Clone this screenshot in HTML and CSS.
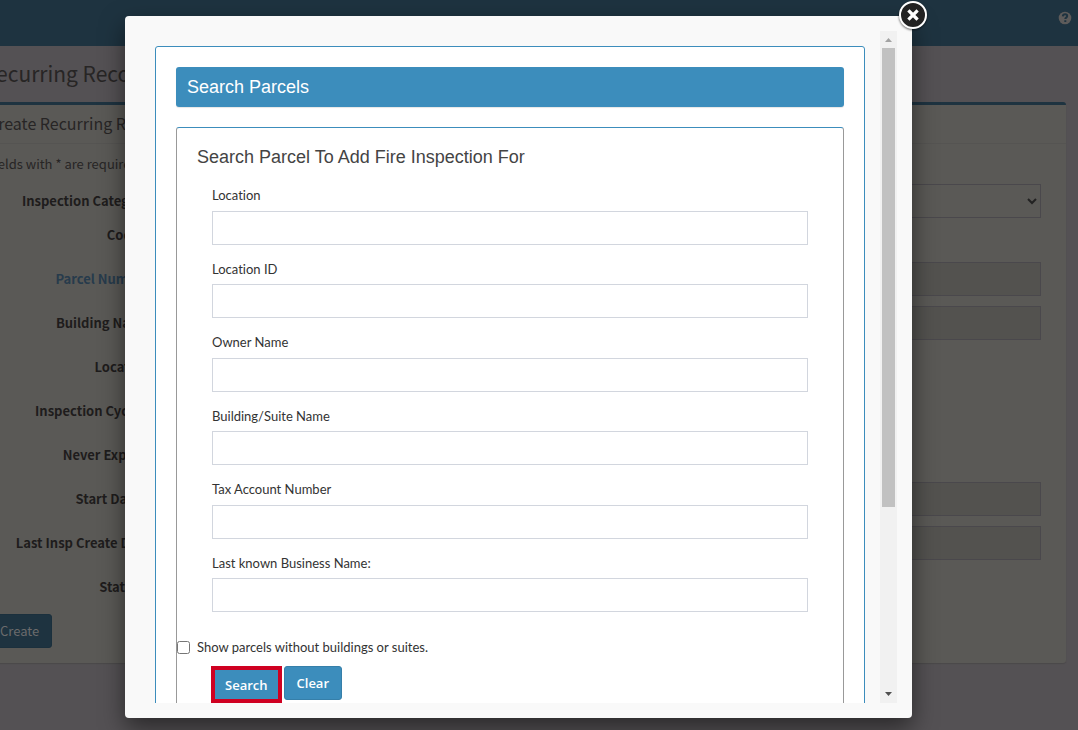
FILE: index.html
```
<!DOCTYPE html>
<html lang="en">
<head>
    <meta charset="UTF-8">
    <meta name="viewport" content="width=device-width, initial-scale=1.0">
    <title>Search Parcels</title>
    <link rel="stylesheet" href="styles.css">
</head>
<body>

<header class="navbar">
    <a href="#" class="help" aria-label="Help">
        <svg width="14" height="14" viewBox="0 0 14 14"><circle cx="7" cy="7" r="6.3" fill="#5d5b5a"/><path d="M4.800 5.300C5 3.900 5.900 3.300 7.100 3.300c1.200 0 2.100.7 2.100 1.800 0 1.500-1.900 1.500-1.900 2.900M7.300 9.200v1.800" fill="none" stroke="#1e3340" stroke-width="2"/></svg>
    </a>
</header>

<main class="page">
    <h1 class="page-title">Recurring Records</h1>
    <section class="box">
        <h2 class="box-title">Create Recurring Record</h2>
        <form class="record-form">
            <p class="note">Fields with * are required.</p>
            <div class="row"><label for="category">Inspection Category</label><select id="category" class="control open"><option></option></select></div>
            <div class="row short"><span class="row-label">Codes:</span></div>
            <div class="row"><label for="parcel" class="link">Parcel Number</label><input id="parcel" class="control" type="text" disabled></div>
            <div class="row"><label for="building">Building Name</label><input id="building" class="control" type="text" disabled></div>
            <div class="row"><span class="row-label">Location</span></div>
            <div class="row"><span class="row-label">Inspection Cycle:*</span></div>
            <div class="row"><span class="row-label">Never Expires</span></div>
            <div class="row"><label for="start">Start Date:*</label><input id="start" class="control" type="text" disabled></div>
            <div class="row"><label for="last">Last Insp Create Date</label><input id="last" class="control" type="text" disabled></div>
            <div class="row"><span class="row-label">Status:*</span></div>
            <button type="button" class="create">Create</button>
        </form>
    </section>
</main>

<div class="overlay">
    <div class="modal" role="dialog" aria-label="Search Parcels">
        <button type="button" class="close" aria-label="Close">
            <svg width="34" height="34" viewBox="0 0 34 34"><circle cx="17" cy="17" r="13" fill="#222" stroke="#fff" stroke-width="2"/><path d="M13.500 13.500l7 7M20.500 13.500l-7 7" stroke="#fff" stroke-width="3.200" stroke-linecap="square" fill="none"/></svg>
        </button>
        <div class="frame">
            <div class="search">
                <h2 class="search-title">Search Parcels</h2>
                <form class="search-box">
                    <h3 class="search-heading">Search Parcel To Add Fire Inspection For</h3>
                    <div class="fields">
                        <div class="field"><label for="f1">Location</label><input type="text" id="f1"></div>
                        <div class="field"><label for="f2">Location ID</label><input type="text" id="f2"></div>
                        <div class="field"><label for="f3">Owner Name</label><input type="text" id="f3"></div>
                        <div class="field"><label for="f4">Building/Suite Name</label><input type="text" id="f4"></div>
                        <div class="field"><label for="f5">Tax Account Number</label><input type="text" id="f5"></div>
                        <div class="field"><label for="f6">Last known Business Name:</label><input type="text" id="f6"></div>
                    </div>
                    <label class="check"><input type="checkbox"> Show parcels without buildings or suites.</label>
                    <div class="buttons">
                        <button type="button" class="btn marked">Search</button>
                        <button type="button" class="btn">Clear</button>
                    </div>
                </form>
            </div>
        </div>
        <div class="scrollbar">
            <svg width="17" height="17" viewBox="0 0 17 17"><path d="M5 11h7L8.500 7z" fill="#a3a3a3"/></svg>
            <div class="track"><div class="thumb"></div></div>
            <svg width="17" height="17" viewBox="0 0 17 17"><path d="M5 6h7L8.500 10z" fill="#505050"/></svg>
        </div>
    </div>
</div>

</body>
</html>
```

FILE: styles.css
```
* {
    box-sizing: border-box;
}
body {
    margin: 0;
    height: 100vh;
    overflow: hidden;
    background: #545154;
    color: #272525;
    font-family: "Noto Sans CJK SC", sans-serif;
    font-size: 13px;
    line-height: 14px;
}
h1, h2, h3, p {
    margin: 0;
    font-weight: normal;
}

/* Page behind the dialog */
.navbar {
    display: flex;
    justify-content: flex-end;
    height: 46px;
    padding: 11px 6px;
    background: #1e3340;
}
.help {
    height: 14px;
}
.page {
    /* the page is scrolled sideways */
    margin-left: -30px;
    padding-right: 12px;
}
.page-title {
    padding: 11px 0 13px 13px;
    font-size: 21px;
    line-height: 32px;
    white-space: nowrap;
}
.box {
    border-top: 3px solid #1e3340;
    border-radius: 3px;
    background: #5a5956;
    box-shadow: 0 1px 1px #4b494a;
}
.box-title {
    padding: 9px 0 10px 18px;
    border-bottom: 1px solid #555452;
    font-size: 16px;
    line-height: 19px;
}
.record-form {
    padding: 12px 25px 15px 17px;
}
.note {
    margin-bottom: 12px;
    line-height: 16px;
}
.row {
    display: grid;
    grid-template-columns: 163px 1fr;
    gap: 30px;
    align-items: center;
    min-height: 34px;
    margin-bottom: 10px;
}
.row.short {
    min-height: 24px;
    align-items: start;
}
.row label, .row-label {
    color: #1e1c1c;
    font-weight: bold;
    text-align: right;
    white-space: nowrap;
}
.row .link {
    color: #273b4c;
}
.control {
    width: 100%;
    height: 34px;
    border: 1px solid #4a484c;
    border-radius: 0;
    background: #53524f;
}
.control.open {
    background: #5a5956;
    color: #222;
}
.create {
    height: 34px;
    padding: 0 12px;
    border: 1px solid #1b303d;
    border-radius: 3px;
    background: #1e3340;
    color: #6b6b6c;
    font: inherit;
}

/* Dialog */
.overlay {
    position: fixed;
    inset: 0;
    display: flex;
    padding: 16px 166px 12px 125px;
}
.modal {
    position: relative;
    display: flex;
    flex: 1;
    min-width: 0;
    padding: 15px;
    border-radius: 4px;
    background: #f9f9f9;
    color: #444;
    box-shadow: 0 10px 25px rgba(0, 0, 0, 0.5);
}
.close {
    position: absolute;
    top: -18px;
    right: -18px;
    width: 34px;
    height: 34px;
    padding: 0;
    border: 0;
    background: none;
    filter: drop-shadow(0 1px 1px rgba(0, 0, 0, 0.6));
}
.frame {
    flex: 1;
    min-width: 0;
    overflow: hidden;
    padding: 15px;
}
.search {
    padding: 20px;
    border: 1px solid #3c8dbc;
    border-radius: 3px;
    background: #fff;
}
.search-title {
    padding: 0 11px;
    margin-bottom: 20px;
    border-radius: 3px;
    background: #3c8dbc;
    box-shadow: 0 1px 1px rgba(0, 0, 0, 0.1);
    color: #fff;
    font-family: "Liberation Sans", Arial, sans-serif;
    font-size: 18px;
    line-height: 40px;
}
.search-box {
    border: 1px solid #999;
    border-top-color: #3c8dbc;
    border-radius: 3px;
    color: #333;
    font-family: "Trebuchet MS", Lato, sans-serif;
    font-size: 13px;
    font-variant-ligatures: none;
}
.search-heading {
    padding: 19px 20px;
    color: #444;
    font-family: "Liberation Sans", Arial, sans-serif;
    font-size: 18px;
    line-height: 20px;
}
.fields {
    padding: 0 35px;
}
.field {
    margin-bottom: 15px;
    line-height: 1.5;
}
.field label {
    display: block;
    margin-bottom: 5px;
}
.field input {
    display: block;
    width: 100%;
    height: 34px;
    border: 1px solid #d2d6de;
    border-radius: 0;
    background: #fff;
}
.check {
    display: flex;
    align-items: center;
    gap: 7px;
    margin: 25px 0 9px;
    line-height: 20px;
}
.check input {
    width: 13px;
    height: 13px;
    margin: 0;
}
.buttons {
    display: flex;
    gap: 2px;
    padding: 0 34px 40px;
    align-items: flex-start;
}
.btn {
    height: 34px;
    padding: 0 12px;
    border: 1px solid #367fa9;
    border-radius: 3px;
    background: #3c8dbc;
    color: #fff;
    font-family: "Open Sans", sans-serif;
    font-size: 13px;
    font-weight: 600;
}
.btn.marked {
    height: 37px;
    padding: 0 10px;
    border: 4px solid #cf0021;
    border-radius: 0;
}
.scrollbar {
    display: flex;
    flex-direction: column;
    width: 17px;
    background: #f1f1f1;
}
.track {
    flex: 1;
    padding: 0 2px;
}
.thumb {
    height: 72%;
    background: #c1c1c1;
}
```
